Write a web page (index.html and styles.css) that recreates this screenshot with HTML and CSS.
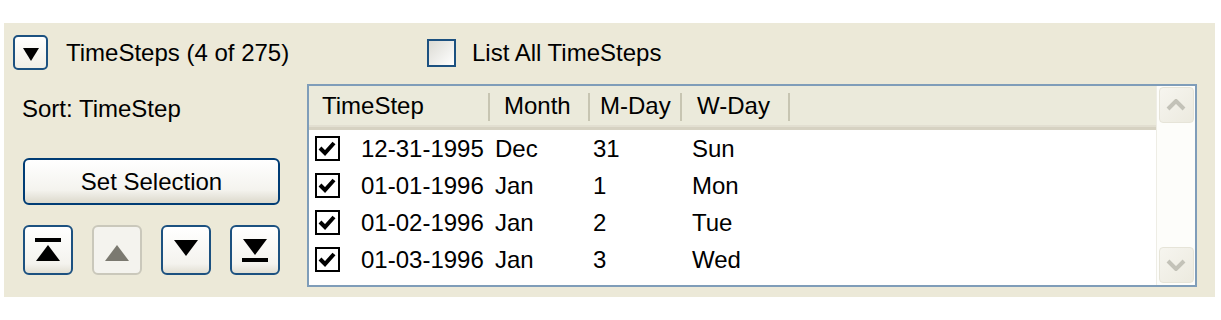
FILE: index.html
```html
<html>
<head>
<link rel="stylesheet" href="styles.css">
</head>
<body>
<div class="panel">
    <div class="top">
        <div class="drop">
            <svg width="18" height="15" viewBox="0 0 18 15"><path d="M1 1 H17 L9 14 Z" fill="#000"/></svg>
        </div>
        <div class="title">TimeSteps (4 of 275)</div>
        <div class="listall">
            <div class="xpcheck"></div>
            <div class="lbl">List All TimeSteps</div>
        </div>
    </div>
    <div class="main">
        <div class="side">
            <div class="sort">Sort: TimeStep</div>
            <div class="setsel">Set Selection</div>
            <div class="arrows">
                <div class="abut">
                    <svg width="30" height="30" viewBox="0 0 30 30"><rect x="2" y="3" width="26" height="4" fill="#000"/><path d="M15 10 L27 26 H3 Z" fill="#000"/></svg>
                </div>
                <div class="abut off">
                    <svg width="30" height="30" viewBox="0 0 30 30"><path d="M15 10 L27 26 H3 Z" fill="#7b7970"/></svg>
                </div>
                <div class="abut">
                    <svg width="30" height="30" viewBox="0 0 30 30"><path d="M3 5 H27 L15 21 Z" fill="#000"/></svg>
                </div>
                <div class="abut">
                    <svg width="30" height="30" viewBox="0 0 30 30"><path d="M3 4 H27 L15 20 Z" fill="#000"/><rect x="2" y="23" width="26" height="4" fill="#000"/></svg>
                </div>
            </div>
        </div>
        <div class="list">
            <div class="grid">
                <div class="head">
                    <div class="hc c1">TimeStep</div>
                    <div class="hc c2">Month</div>
                    <div class="hc c3">M-Day</div>
                    <div class="hc c4">W-Day</div>
                    <div class="hc rest"></div>
                </div>
                <div class="row">
                    <div class="cell c1"><span class="tick"></span>12-31-1995</div>
                    <div class="cell c2">Dec</div>
                    <div class="cell c3">31</div>
                    <div class="cell c4">Sun</div>
                </div>
                <div class="row">
                    <div class="cell c1"><span class="tick"></span>01-01-1996</div>
                    <div class="cell c2">Jan</div>
                    <div class="cell c3">1</div>
                    <div class="cell c4">Mon</div>
                </div>
                <div class="row">
                    <div class="cell c1"><span class="tick"></span>01-02-1996</div>
                    <div class="cell c2">Jan</div>
                    <div class="cell c3">2</div>
                    <div class="cell c4">Tue</div>
                </div>
                <div class="row">
                    <div class="cell c1"><span class="tick"></span>01-03-1996</div>
                    <div class="cell c2">Jan</div>
                    <div class="cell c3">3</div>
                    <div class="cell c4">Wed</div>
                </div>
            </div>
            <div class="scroll">
                <div class="sbtn">
                    <svg width="20" height="12" viewBox="0 0 20 12"><path d="M2 10 L10 2 L18 10" fill="none" stroke="#c3c2b8" stroke-width="4"/></svg>
                </div>
                <div class="strack"></div>
                <div class="sbtn">
                    <svg width="20" height="12" viewBox="0 0 20 12"><path d="M2 2 L10 10 L18 2" fill="none" stroke="#c3c2b8" stroke-width="4"/></svg>
                </div>
            </div>
        </div>
    </div>
</div>
</body>
</html>
```

FILE: styles.css
```css
body {
    margin: 0;
    background: #fff;
    font-family: "Liberation Sans", Arial, sans-serif;
    font-size: 24px;
    color: #000;
}
.panel {
    margin: 23px 0 0 4px;
    width: 1211px;
    height: 274px;
    background: #ece9d8;
    box-sizing: border-box;
    padding: 12px 0 0 9px;
}
.top {
    display: flex;
    align-items: center;
    height: 35px;
}
.drop {
    width: 35px;
    height: 35px;
    box-sizing: border-box;
    border: 2px solid #1c5180;
    border-radius: 5px;
    background: linear-gradient(#ffffff, #f1efe6);
    display: flex;
    align-items: center;
    justify-content: center;
    padding-top: 3px;
}
.title {
    margin-left: 18px;
    width: 361px;
}
.listall {
    display: flex;
    align-items: center;
}
.xpcheck {
    width: 29px;
    height: 28px;
    box-sizing: border-box;
    border: 2px solid #1c5180;
    background: linear-gradient(135deg, #dcdbd4, #ffffff);
}
.lbl {
    margin-left: 16px;
}
.main {
    display: flex;
    margin-top: 14px;
}
.side {
    width: 294px;
    box-sizing: border-box;
    padding-left: 9px;
}
.sort {
    margin-top: 11px;
    height: 40px;
}
.setsel {
    margin: 23px 0 0 1px;
    width: 257px;
    height: 47px;
    box-sizing: border-box;
    border: 2px solid #003c74;
    border-radius: 6px;
    background: linear-gradient(#ffffff, #f4f3ee 70%, #dcd9cc);
    display: flex;
    align-items: center;
    justify-content: center;
}
.arrows {
    display: flex;
    gap: 19px;
    margin: 20px 0 0 1px;
}
.abut {
    width: 50px;
    height: 50px;
    box-sizing: border-box;
    border: 2px solid #1c5180;
    border-radius: 6px;
    background: linear-gradient(#ffffff, #f4f3ee 80%, #e2dfd3);
    display: flex;
    align-items: center;
    justify-content: center;
}
.abut.off {
    border-color: #cac8bb;
    background: #f4f3ee;
}
.list {
    width: 890px;
    height: 203px;
    box-sizing: border-box;
    border: 2px solid #7f9db9;
    background: #fff;
    display: flex;
}
.grid {
    flex: 1;
}
.head {
    display: flex;
    height: 44px;
    background: #ebeadb;
    border-bottom: 3px solid #d6d2c2;
    box-shadow: inset 0 -2px 0 #e2dfd1;
    box-sizing: border-box;
}
.hc {
    position: relative;
    display: flex;
    align-items: center;
    box-sizing: border-box;
    padding-bottom: 2px;
}
.hc::after {
    content: "";
    position: absolute;
    right: 0;
    top: 7px;
    bottom: 6px;
    width: 2px;
    background: #c7c5b2;
}
.hc.rest::after {
    display: none;
}
.head .c1 { width: 181px; padding-left: 13px; }
.head .c2 { width: 100px; padding-left: 14px; }
.head .c3 { width: 92px; padding-left: 10px; }
.head .c4 { width: 108px; padding-left: 15px; }
.head .rest { flex: 1; }
.row {
    display: flex;
    height: 37px;
    align-items: center;
}
.cell {
    display: flex;
    align-items: center;
    box-sizing: border-box;
}
.row .c1 { width: 186px; padding-left: 6px; }
.row .c2 { width: 98px; }
.row .c3 { width: 99px; }
.row .c4 { width: 100px; }
.tick {
    width: 25px;
    height: 25px;
    box-sizing: border-box;
    border: 2px solid #000;
    margin-right: 21px;
    background: #fff url("data:image/svg+xml,%3Csvg xmlns='http://www.w3.org/2000/svg' width='21' height='21'%3E%3Cpath d='M3 10 L8 15 L17 5' fill='none' stroke='%23000' stroke-width='4'/%3E%3C/svg%3E") no-repeat center;
}
.scroll {
    width: 38px;
    display: flex;
    flex-direction: column;
    align-items: center;
    padding: 1px 0 2px;
    background: #fdfdfa;
    border-left: 1px solid #eeede5;
}
.sbtn {
    width: 35px;
    height: 36px;
    box-sizing: border-box;
    border: 1px solid #e6e4d8;
    border-radius: 4px;
    background: linear-gradient(135deg, #f6f5ef, #eceadf);
    display: flex;
    align-items: center;
    justify-content: center;
}
.strack {
    flex: 1;
}
```
